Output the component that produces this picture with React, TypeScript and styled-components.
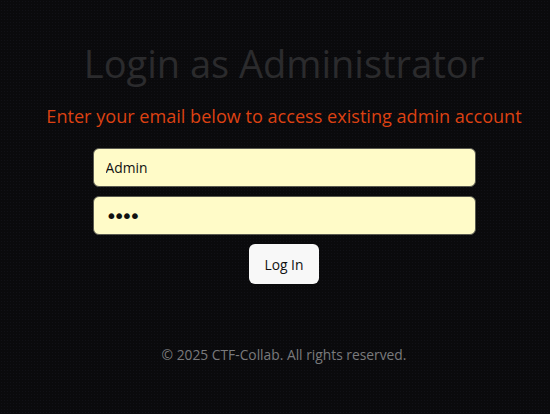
import React from "react";
import styled, { createGlobalStyle } from "styled-components";

const Global = createGlobalStyle`
  html, body { margin: 0; padding: 0; background: #0a0a0c; }
  body { font-family: "Open Sans", "Noto Sans", sans-serif; }
  * { box-sizing: border-box; }
`;

const Page = styled.div`
  width: 550px;
  height: 414px;
  background-color: #0a0a0c;
  background-image: radial-gradient(rgba(40, 40, 60, 0.22) 0.6px, transparent 0.8px);
  background-size: 3px 3px;
  display: flex;
  flex-direction: column;
  align-items: center;
  padding-top: 37px;
  padding-left: 18px;
`;

const Title = styled.h1`
  margin: 0;
  font-size: 38px;
  font-weight: 400;
  line-height: 52px;
  color: #2b2b2d;
`;

const Subtitle = styled.p`
  margin: 15px 0 0;
  font-size: 18.1px;
  line-height: 24px;
  color: #dd4112;
  white-space: nowrap;
`;

const Form = styled.form`
  display: flex;
  flex-direction: column;
  align-items: center;
  gap: 9px;
  margin-top: 20px;
  width: 383px;
`;

const Input = styled.input`
  width: 100%;
  height: 39px;
  border: 1px solid #5a5a50;
  border-radius: 6px;
  background: #fffbc8;
  padding: 0 12px;
  font-family: "Open Sans", "Noto Sans", sans-serif;
  font-size: 13.8px;
  color: #111;
  outline: none;
  &[type="password"] {
    font-family: "DejaVu Sans", sans-serif;
    font-size: 20px;
    letter-spacing: -4px;
  }
`;

const Button = styled.button`
  width: 70px;
  height: 40px;
  border: none;
  border-radius: 6px;
  background: #f8f8f8;
  font-family: "Open Sans", "Noto Sans", sans-serif;
  font-size: 13.8px;
  color: #111;
  cursor: pointer;
`;

const Footer = styled.footer`
  margin-top: 61px;
  font-size: 13.8px;
  color: #7a7a7c;
`;

export default function App() {
  return (
    <>
      <Global />
      <Page>
        <Title>Login as Administrator</Title>
        <Subtitle>Enter your email below to access existing admin account</Subtitle>
        <Form onSubmit={(e) => e.preventDefault()}>
          <Input type="text" defaultValue="Admin" />
          <Input type="password" defaultValue="1234" />
          <Button type="submit">Log In</Button>
        </Form>
        <Footer>© 2025 CTF-Collab. All rights reserved.</Footer>
      </Page>
    </>
  );
}
